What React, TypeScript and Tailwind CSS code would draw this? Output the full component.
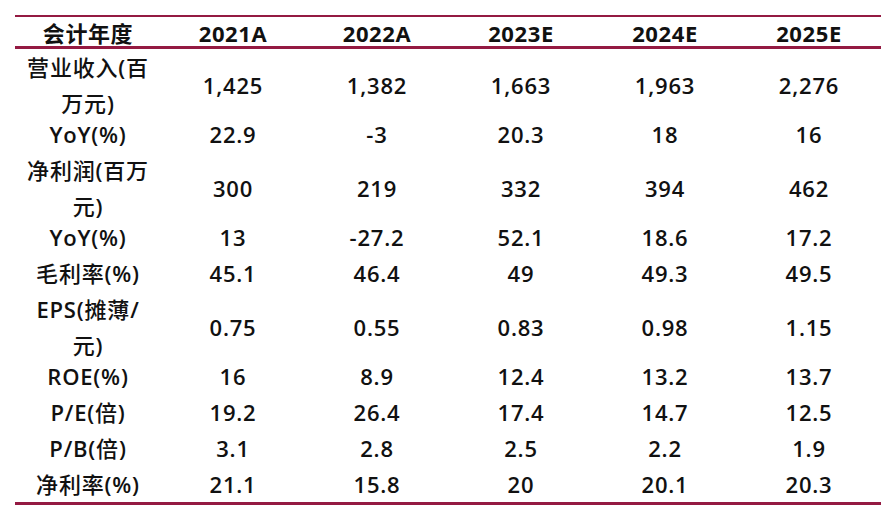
import React from "react";

type Row = { label: React.ReactNode; values: string[]; tall?: boolean };

const C = ({ children }: { children: React.ReactNode }) => (
  <span className="font-medium">{children}</span>
);

const rows: Row[] = [
  { label: <><C>营业收入</C>(<C>百</C><br /><C>万元</C>)</>, values: ["1,425", "1,382", "1,663", "1,963", "2,276"], tall: true },
  { label: "YoY(%)", values: ["22.9", "-3", "20.3", "18", "16"] },
  { label: <><C>净利润</C>(<C>百万</C><br /><C>元</C>)</>, values: ["300", "219", "332", "394", "462"], tall: true },
  { label: "YoY(%)", values: ["13", "-27.2", "52.1", "18.6", "17.2"] },
  { label: <><C>毛利率</C>(%)</>, values: ["45.1", "46.4", "49", "49.3", "49.5"] },
  { label: <>EPS(<C>摊薄</C>/<br /><C>元</C>)</>, values: ["0.75", "0.55", "0.83", "0.98", "1.15"], tall: true },
  { label: "ROE(%)", values: ["16", "8.9", "12.4", "13.2", "13.7"] },
  { label: <>P/E(<C>倍</C>)</>, values: ["19.2", "26.4", "17.4", "14.7", "12.5"] },
  { label: <>P/B(<C>倍</C>)</>, values: ["3.1", "2.8", "2.5", "2.2", "1.9"] },
  { label: <><C>净利率</C>(%)</>, values: ["21.1", "15.8", "20", "20.1", "20.3"] },
];

const headers = ["2021A", "2022A", "2023E", "2024E", "2025E"];

export default function App() {
  return (
    <div
      className="w-[896px] h-[524px] bg-white text-[#111111] overflow-hidden"
      style={{ fontFamily: '"Open Sans", "Noto Sans CJK SC", sans-serif' }}
    >
      <div className="ml-[15px] mt-[15px] w-[866px] border-t-2 border-b-[3px] border-[#941a42]">
        <div className="grid grid-cols-[146px_repeat(5,144px)] h-[32px] items-center border-b-[3px] border-[#941a42] text-[22px] font-bold tracking-[0.6px]">
          <div className="text-center">会计年度</div>
          {headers.map((h) => (
            <div key={h} className="text-center">{h}</div>
          ))}
        </div>
        {rows.map((r, i) => (
          <div
            key={i}
            className={`grid grid-cols-[146px_repeat(5,144px)] items-center text-[22px] tracking-[0.8px] font-semibold ${r.tall ? "h-[67px]" : "h-[36px]"}`}
          >
            <div className="text-center leading-[36px]">{r.label}</div>
            {r.values.map((v, j) => (
              <div key={j} className="text-center">{v}</div>
            ))}
          </div>
        ))}
      </div>
    </div>
  );
}
